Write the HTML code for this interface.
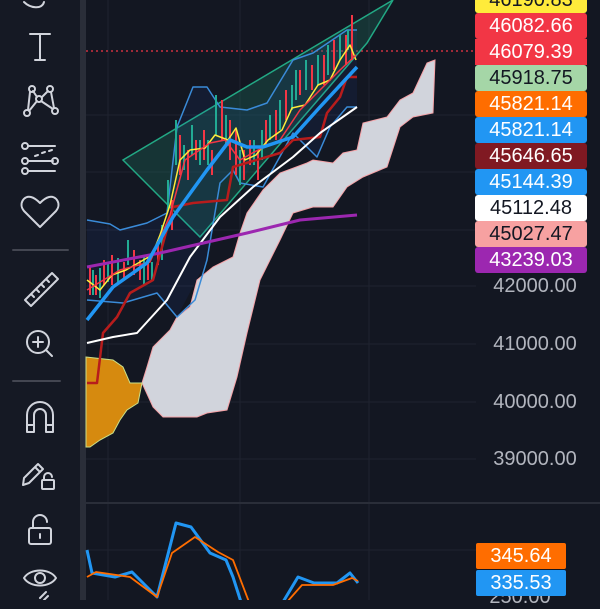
<!DOCTYPE html>
<html><head><meta charset="utf-8"><style>
html,body{margin:0;padding:0;background:#131722;width:600px;height:600px;overflow:hidden;font-family:"Liberation Sans",sans-serif}
.lbl{position:absolute;left:475px;width:112px;height:26px;line-height:26px;text-align:center;font-size:20px;border-radius:3px}
.lbl2{position:absolute;left:476px;width:90px;height:26px;line-height:26px;text-align:center;font-size:20px;border-radius:2px}
.ax{position:absolute;left:475px;width:120px;text-align:center;font-size:20px;color:#b2b5be}
</style></head><body>
<svg width="600" height="600" style="position:absolute;left:0;top:0">
<rect x="0" y="0" width="600" height="600" fill="#131722"/>
<rect x="0" y="0" width="80" height="600" fill="#151924"/>
<rect x="80" y="0" width="6" height="600" fill="#2a2e39"/>
<g stroke="#1f2330" stroke-width="1">
<line x1="108" y1="0" x2="108" y2="600"/><line x1="240" y1="0" x2="240" y2="600"/><line x1="369" y1="0" x2="369" y2="600"/>
<line x1="86" y1="115" x2="476" y2="115"/><line x1="86" y1="172" x2="476" y2="172"/><line x1="86" y1="230" x2="476" y2="230"/>
<line x1="86" y1="286" x2="476" y2="286"/><line x1="86" y1="344" x2="476" y2="344"/><line x1="86" y1="402" x2="476" y2="402"/><line x1="86" y1="459" x2="476" y2="459"/>
<line x1="86" y1="550" x2="476" y2="550"/>
</g>
<line x1="86" y1="503" x2="600" y2="503" stroke="#2a2e39" stroke-width="2"/>
<line x1="86" y1="51" x2="476" y2="51" stroke="#f23645" stroke-width="1.2" stroke-dasharray="2,3"/>
<polygon fill="#d1d4dc" stroke="#f5a3a8" stroke-width="1" points="435,60 427,63 413,93 400,100 387,117 363,123 357,150 343,153 333,163 313,160 307,163 280,173 263,190 247,213 240,233 233,257 213,267 197,280 190,307 177,317 170,330 153,347 147,367 142,383 153,407 163,417 197,417 207,413 227,410 237,377 247,333 260,280 280,240 293,213 313,207 333,207 347,187 363,177 387,167 400,127 413,117 433,113"/>
<polygon fill="#d68a0f" stroke="#c9e08a" stroke-width="1" points="86,357 113,360 123,367 130,383 142,383 138,403 127,410 120,420 113,433 100,440 90,447 86,447"/>
<polygon fill="#1e6b5a" fill-opacity="0.35" stroke="#22a884" stroke-width="1.5" points="123,160 393,0 367,43 200,237"/>
<polygon fill="#2962ff" fill-opacity="0.07" points="87,220 120,230 147,223 167,213 177,127 193,87 207,87 220,107 247,110 267,103 293,60 313,53 347,30 357,30 357,107 347,107 330,127 317,157 293,133 263,150 240,183 233,170 220,183 207,260 177,317 157,293 123,303 87,300"/>
<g fill="none" stroke-linejoin="round">
<polyline stroke="#3a8bd8" stroke-width="1.5" points="87,220 110,224 120,230 147,223 167,213 177,127 193,87 207,87 220,107 247,110 267,103 293,60 313,53 347,30 357,30"/>
<polyline stroke="#3a8bd8" stroke-width="1.5" points="87,300 123,303 157,293 177,317 195,300 207,260 220,183 233,170 240,183 263,187 293,133 317,157 330,127 347,107 357,107"/>
<path stroke="#f23645" stroke-width="2" d="M90,265v30M96,275v20M104,260v25M112,255v30M124,262v18M134,250v25M140,260v20M148,258v22M158,240v25M172,200v30M180,135v40M188,150v30M196,140v20M204,130v30M212,150v25M222,100v40M230,120v40M236,130v45M244,150v30M250,140v25M258,150v30M266,120v25M276,110v30M286,90v30M300,70v25M312,65v25M324,55v30M334,40v30M346,35v30M352,15v45"/>
<path stroke="#22ab94" stroke-width="2" d="M93,270v25M100,268v30M108,262v20M118,258v25M128,240v25M144,255v30M152,262v18M162,225v35M168,180v30M176,120v45M184,145v25M192,125v30M200,140v25M208,140v25M216,95v40M226,115v30M240,150v35M254,140v25M262,130v30M270,115v25M280,100v30M292,85v25M296,70v30M306,60v30M318,55v30M328,45v30M340,35v25M348,30v20"/>
<polyline stroke="#ffeb3b" stroke-width="1.5" points="87,280 100,290 112,275 126,270 140,262 152,255 160,235 170,205 180,160 190,150 205,148 215,135 228,140 236,128 245,160 256,155 268,140 282,130 292,108 305,105 318,85 330,80 340,60 350,45 356,60"/>
<polyline stroke="#b71c1c" stroke-width="2.5" points="87,383 97,383 103,333 117,317 130,293 153,280 173,207 193,203 227,200 233,167 280,153 293,140 320,137 327,113 340,97 347,77 357,77"/>
<polyline stroke="#f23645" stroke-width="1.5" points="87,290 120,270 150,262 170,215 185,160 210,143 225,140 240,160 258,150 280,140 300,110 320,90 340,70 356,55"/>
<polyline stroke="#ffffff" stroke-width="2" points="87,343 113,337 137,333 167,300 190,257 220,217 253,187 293,157 320,133 357,107"/>
<polyline stroke="#9c27b0" stroke-width="3" points="87,267 160,253 247,233 300,220 357,215"/>
<polyline stroke="#2196f3" stroke-width="3.5" points="87,320 113,287 147,263 173,217 207,170 230,140 247,147 263,147 293,137 320,107 357,67"/>
<polyline stroke="#2196f3" stroke-width="3" points="87,550 92,573 115,577 132,572 157,597 176,523 191,527 210,553 226,560 233,577 241,602"/>
<polyline stroke="#2196f3" stroke-width="3" points="283,602 298,577 314,583 337,583 350,573 358,583"/>
<polyline stroke="#ff6d00" stroke-width="1.8" points="87,577 96,572 130,577 157,597 172,553 195,537 218,552 233,560 249,602"/>
<polyline stroke="#ff6d00" stroke-width="1.8" points="287,602 302,585 333,585 352,578 358,581"/>
</g>
<g fill="none" stroke="#d1d4dc" stroke-width="2" stroke-linecap="round" stroke-linejoin="round">
<path d="M24,2 C30,8 42,10 44,2"/>
<path d="M30,34h20M40,34v26M35,60h10"/>
<circle cx="32" cy="89" r="3"/><circle cx="50" cy="89" r="3"/><circle cx="27" cy="113" r="3"/><circle cx="55" cy="111" r="3"/><circle cx="39" cy="99" r="3"/>
<path d="M30,92 L28,110 M33,91 L37,97 M42,97 L48,91 M51,92 L54,108 M29,111 L37,101 M41,101 L53,109"/>
<circle cx="25" cy="146" r="3"/><path d="M28,146h27"/><circle cx="25" cy="161" r="3"/><path d="M28,161h25"/><circle cx="55" cy="161" r="3"/><circle cx="25" cy="171" r="3"/><path d="M28,171h27"/><path d="M35,156l3,-1M42,153l3,-1M49,151l3,-1" />
<path d="M40,227 L24,211 C18,204 24,195 31,197 C35,198 38,201 40,203 C42,201 45,198 49,197 C56,195 62,204 56,211 Z"/>
<path d="M13,250h55" stroke="#434651"/>
<path d="M25,300 L52,273 L58,279 L31,306 Z M31,294l3,3M36,289l3,3M41,284l3,3M46,279l3,3"/>
<circle cx="38" cy="342" r="11"/><path d="M46,350l6,6M38,337v10M33,342h10"/>
<path d="M13,381h47" stroke="#434651"/>
<path d="M27,432 V415 A13,13 0 0 1 53,415 V432 H46 V415 A6,6 0 0 0 34,415 V432 Z M27,425h7M46,425h7"/>
<path d="M24,478 L38,464 L43,469 L29,483 L23,485 Z M35,467l5,5"/>
<rect x="42" y="480" width="12" height="9" rx="1"/><path d="M44,480v-3a4,4 0 0 1 8,0"/>
<rect x="29" y="528" width="22" height="16" rx="2"/><path d="M33,528v-6a7,7 0 0 1 14,0"/><path d="M40,534v4"/>
<path d="M24,578 C30,568 50,568 56,578 C50,588 30,588 24,578 Z"/><circle cx="40" cy="578" r="5"/>
<path d="M40,598 l6,-6 M44,600 l4,-4"/>
</g>
</svg>
<div class="lbl" style="top:-13px;background:#ffeb3b;color:#131722">46190.83</div>
<div class="lbl" style="top:13px;background:#f23645;color:#fff">46082.66</div>
<div class="lbl" style="top:39px;background:#f23645;color:#fff;border-radius:0">46079.39</div>
<div class="lbl" style="top:65px;background:#a5d6a7;color:#131722">45918.75</div>
<div class="lbl" style="top:91px;background:#ff6d00;color:#fff">45821.14</div>
<div class="lbl" style="top:117px;background:#2196f3;color:#fff">45821.14</div>
<div class="lbl" style="top:143px;background:#801922;color:#fff">45646.65</div>
<div class="lbl" style="top:169px;background:#2196f3;color:#fff">45144.39</div>
<div class="lbl" style="top:195px;background:#ffffff;color:#131722">45112.48</div>
<div class="lbl" style="top:221px;background:#f7a1a1;color:#131722">45027.47</div>
<div class="lbl" style="top:247px;background:#9c27b0;color:#fff">43239.03</div>
<div class="ax" style="top:275px">42000.00</div>
<div class="ax" style="top:333px">41000.00</div>
<div class="ax" style="top:391px">40000.00</div>
<div class="ax" style="top:448px">39000.00</div>
<div class="ax" style="top:586px;left:460px">250.00</div>
<div class="lbl2" style="top:543px;background:#ff6d00;color:#fff">345.64</div>
<div class="lbl2" style="top:570px;background:#2196f3;color:#fff">335.53</div>
</body></html>
